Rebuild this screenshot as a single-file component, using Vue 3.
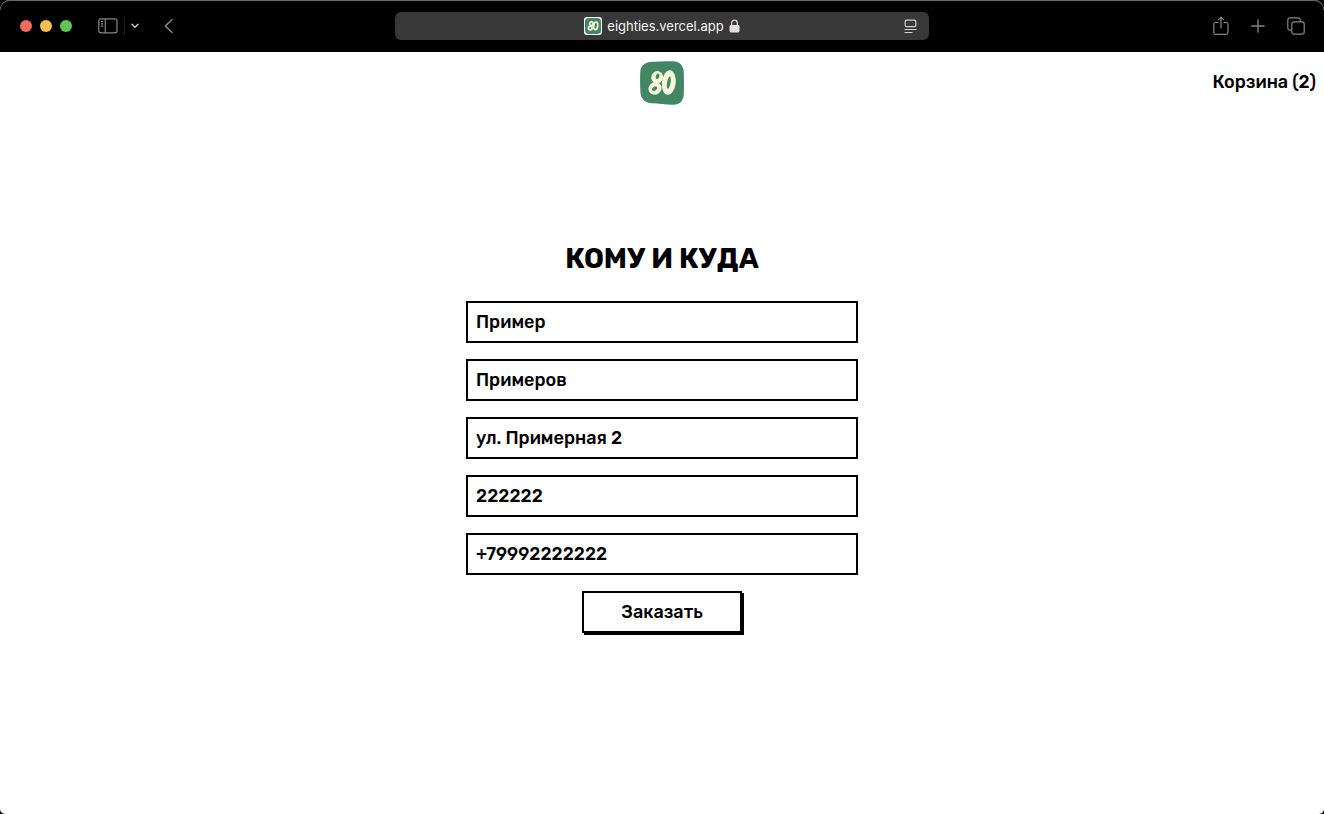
<script setup>
import { ref } from 'vue'

const cartCount = ref(2)
const fields = ref([
  { id: 'name', label: 'Имя', type: 'text', value: 'Пример' },
  { id: 'surname', label: 'Фамилия', type: 'text', value: 'Примеров' },
  { id: 'address', label: 'Адрес', type: 'text', value: 'ул. Примерная 2' },
  { id: 'zip', label: 'Индекс', type: 'text', value: '222222' },
  { id: 'phone', label: 'Телефон', type: 'tel', value: '+79992222222' },
])
</script>

<template>
  <div class="window">
    <div class="toolbar">
      <div class="side">
        <div class="lights">
          <button class="light red" aria-label="Закрыть"></button>
          <button class="light yellow" aria-label="Свернуть"></button>
          <button class="light green" aria-label="Развернуть"></button>
        </div>
        <button class="tool sidebar" aria-label="Боковая панель">
          <svg width="20" height="16" viewBox="0 0 20 16" fill="none" stroke="#858585" stroke-width="1.2">
            <rect x="0.8" y="0.8" width="18.2" height="14" rx="2" />
            <path d="M7.3 1v14M2.8 3.5h2.4M2.8 5.8h2.4M2.8 8.1h2.4" />
          </svg>
        </button>
        <span class="divider"></span>
        <button class="tool chevron" aria-label="Группы вкладок">
          <svg width="8" height="6" viewBox="0 0 8 6" fill="none" stroke="#c4c4c4" stroke-width="1.5" stroke-linecap="round" stroke-linejoin="round">
            <path d="M1 1.2l3 3 3-3" />
          </svg>
        </button>
        <button class="tool" aria-label="Назад">
          <svg width="10" height="16" viewBox="0 0 10 16" fill="none" stroke="#8a8a8a" stroke-width="1.4" stroke-linecap="round" stroke-linejoin="round">
            <path d="M8 1.4L1.4 8 8 14.6" />
          </svg>
        </button>
      </div>

      <div class="address">
        <span class="site">
          <span class="favicon">
            <svg width="16" height="16" viewBox="0 0 44 44">
              <rect width="44" height="44" rx="10" fill="#438664" />
              <g fill="none" stroke="#f7f5d8" stroke-width="4.5">
                <ellipse cx="17.5" cy="15.5" rx="4.5" ry="5" transform="rotate(20 17.5 15.5)" />
                <ellipse cx="14.5" cy="27.5" rx="5" ry="5" />
                <ellipse cx="29.5" cy="21.5" rx="5.5" ry="10.5" transform="rotate(8 29.5 21.5)" />
              </g>
            </svg>
          </span>
          <span>eighties.vercel.app</span>
          <svg width="11" height="14" viewBox="0 0 11 14">
            <path d="M2.7 7V4a2.8 2.8 0 0 1 5.6 0V7" fill="none" stroke="#d5d5d5" stroke-width="1.3" />
            <rect x="0.5" y="6" width="10" height="7.5" rx="1.4" fill="#dedede" />
          </svg>
        </span>
        <button class="reader" aria-label="Настройки страницы">
          <svg width="13" height="15" viewBox="0 0 13 15" fill="none" stroke="#cfcfcf" stroke-width="1.2">
            <rect x="1.2" y="1.2" width="10.6" height="6.4" rx="1.4" />
            <path d="M0.5 10.5h12M0.5 13.5h8" />
          </svg>
        </button>
      </div>

      <div class="side right">
        <button class="tool" aria-label="Поделиться">
          <svg width="16" height="20" viewBox="0 0 16 20" fill="none" stroke="#858585" stroke-width="1.2" stroke-linecap="round" stroke-linejoin="round">
            <path d="M5 6.5H2.6a1.8 1.8 0 0 0-1.8 1.8v8.2a1.8 1.8 0 0 0 1.8 1.8h10.6a1.8 1.8 0 0 0 1.8-1.8V8.3a1.8 1.8 0 0 0-1.8-1.8H11M8 12V1.2M5.500 3.600L8 1.200l2.500 2.400" />
          </svg>
        </button>
        <button class="tool" aria-label="Новая вкладка">
          <svg width="14" height="14" viewBox="0 0 14 14" fill="none" stroke="#858585" stroke-width="1.3" stroke-linecap="round">
            <path d="M7 0.8v12.4M0.8 7h12.4" />
          </svg>
        </button>
        <button class="tool" aria-label="Обзор вкладок">
          <svg width="18" height="18" viewBox="0 0 18 18" fill="none" stroke="#858585" stroke-width="1.2">
            <rect x="4.8" y="4.8" width="12.4" height="12.4" rx="2.2" />
            <path d="M4.8 13.2H3a2.2 2.2 0 0 1-2.2-2.2V3A2.2 2.2 0 0 1 3 0.8h8A2.2 2.2 0 0 1 13.2 3v1.8" />
          </svg>
        </button>
      </div>
    </div>

    <div class="page">
      <header class="header">
        <a class="logo" href="#" aria-label="80">
          <svg width="44" height="44" viewBox="0 0 44 44">
            <path d="M10.500 1C16 0.300 27 0.200 33 0.200c6 0 10.300 4 10.700 10.300.4 7 .3 15 .1 22.500-.2 7-4.300 11-11 10.700-7.500-.2-14-1-20.800-1.400C4.500 41.800.8 37.500.4 31 0 24 0 17 .3 10.800.6 5 4.500 1.600 10.500 1z" fill="#438664" />
            <g fill="#f7f5d8">
              <ellipse cx="17.2" cy="16.3" rx="5.8" ry="6.3" transform="rotate(20 17.2 16.3)" />
              <ellipse cx="15" cy="27.4" rx="6.8" ry="6.1" transform="rotate(-30 15 27.4)" />
              <ellipse cx="28.800" cy="21.600" rx="6.900" ry="12.300" transform="rotate(6 28.800 21.600)" />
            </g>
            <g fill="#438664">
              <ellipse cx="17.6" cy="15.300" rx="1.800" ry="2.800" transform="rotate(20 17.6 15.3)" />
              <ellipse cx="14.6" cy="27.600" rx="3" ry="1.900" transform="rotate(-35 14.6 27.6)" />
              <ellipse cx="28.800" cy="21.600" rx="1.700" ry="6.200" transform="rotate(10 28.800 21.600)" />
            </g>
          </svg>
        </a>
        <a class="cart" href="#">Корзина ({{ cartCount }})</a>
      </header>

      <main class="main">
        <form class="form" @submit.prevent>
          <h1>КОМУ И КУДА</h1>
          <input
            v-for="field in fields"
            :id="field.id"
            :key="field.id"
            v-model="field.value"
            :type="field.type"
            :aria-label="field.label"
          />
          <button class="submit" type="submit">Заказать</button>
        </form>
      </main>
    </div>
  </div>
</template>

<style>
body {
  margin: 0;
  background: #000;
}
</style>

<style scoped>
.window {
  display: flex;
  flex-direction: column;
  box-sizing: border-box;
  min-height: 100vh;
  overflow: hidden;
  border-radius: 10px 10px 5px 5px;
  background: #fff;
  color: #000;
  font-family: Rubik, Inter, "Noto Sans", sans-serif;
}

button {
  padding: 0;
  border: 0;
  background: none;
  color: inherit;
  font: inherit;
}

svg {
  display: block;
}

.toolbar {
  display: grid;
  grid-template-columns: 1fr minmax(240px, 534px) 1fr;
  align-items: center;
  height: 52px;
  border-radius: 10px 10px 0 0;
  background: #000;
  box-shadow: inset 0 1px 0 #686868;
}

.side {
  display: flex;
  align-items: center;
  padding-left: 20px;
}

.right {
  justify-content: flex-end;
  gap: 22px;
  padding: 0 19px 0 0;
}

.lights {
  display: flex;
  gap: 8px;
}

.light {
  width: 12px;
  height: 12px;
  border-radius: 50%;
}

.red {
  background: #ed6a5e;
}

.yellow {
  background: #f5bf4f;
}

.green {
  background: #61c554;
}

.sidebar {
  margin-left: 26px;
}

.divider {
  width: 1px;
  height: 18px;
  margin: 0 6px;
  background: #1d1d1d;
}

.chevron {
  margin-right: 25px;
}

.address {
  display: grid;
  grid-template-columns: 1fr auto 1fr;
  align-items: center;
  height: 28px;
  border-radius: 6px;
  background: #383838;
  color: #f4f4f4;
  font: 400 13px/28px Inter, sans-serif;
}

.site {
  display: flex;
  grid-column: 2;
  align-items: center;
  gap: 5px;
}

.favicon {
  padding: 1px;
  border-radius: 3px;
  background: #fff;
}

.reader {
  justify-self: end;
  margin-right: 12px;
}

.page {
  display: flex;
  flex: 1;
  flex-direction: column;
}

.header {
  display: grid;
  grid-template-columns: 1fr auto 1fr;
  align-items: center;
  padding: 9px 8px;
}

.logo {
  grid-column: 2;
}

.cart {
  justify-self: end;
  padding-bottom: 2px;
  color: inherit;
  font-size: 18px;
  font-weight: 500;
  line-height: 24px;
  text-decoration: none;
}

.main {
  display: flex;
  justify-content: center;
  padding: 129px 16px 64px;
}

.form {
  display: flex;
  flex-direction: column;
  align-items: center;
  gap: 16px;
  width: 100%;
  max-width: 392px;
}

h1 {
  margin: 0 0 10px;
  font-size: 28px;
  font-weight: 700;
  line-height: 32px;
}

input {
  box-sizing: border-box;
  width: 100%;
  height: 42px;
  padding: 0 8px;
  border: 2px solid #000;
  border-radius: 0;
  outline: 0;
  background: #fff;
  color: #000;
  font: inherit;
  font-size: 18px;
  font-weight: 500;
}

.submit {
  width: 160px;
  height: 42px;
  border: 2px solid #000;
  background: #fff;
  box-shadow: 2px 2px 0 #000;
  font-size: 18px;
  font-weight: 500;
}
</style>
